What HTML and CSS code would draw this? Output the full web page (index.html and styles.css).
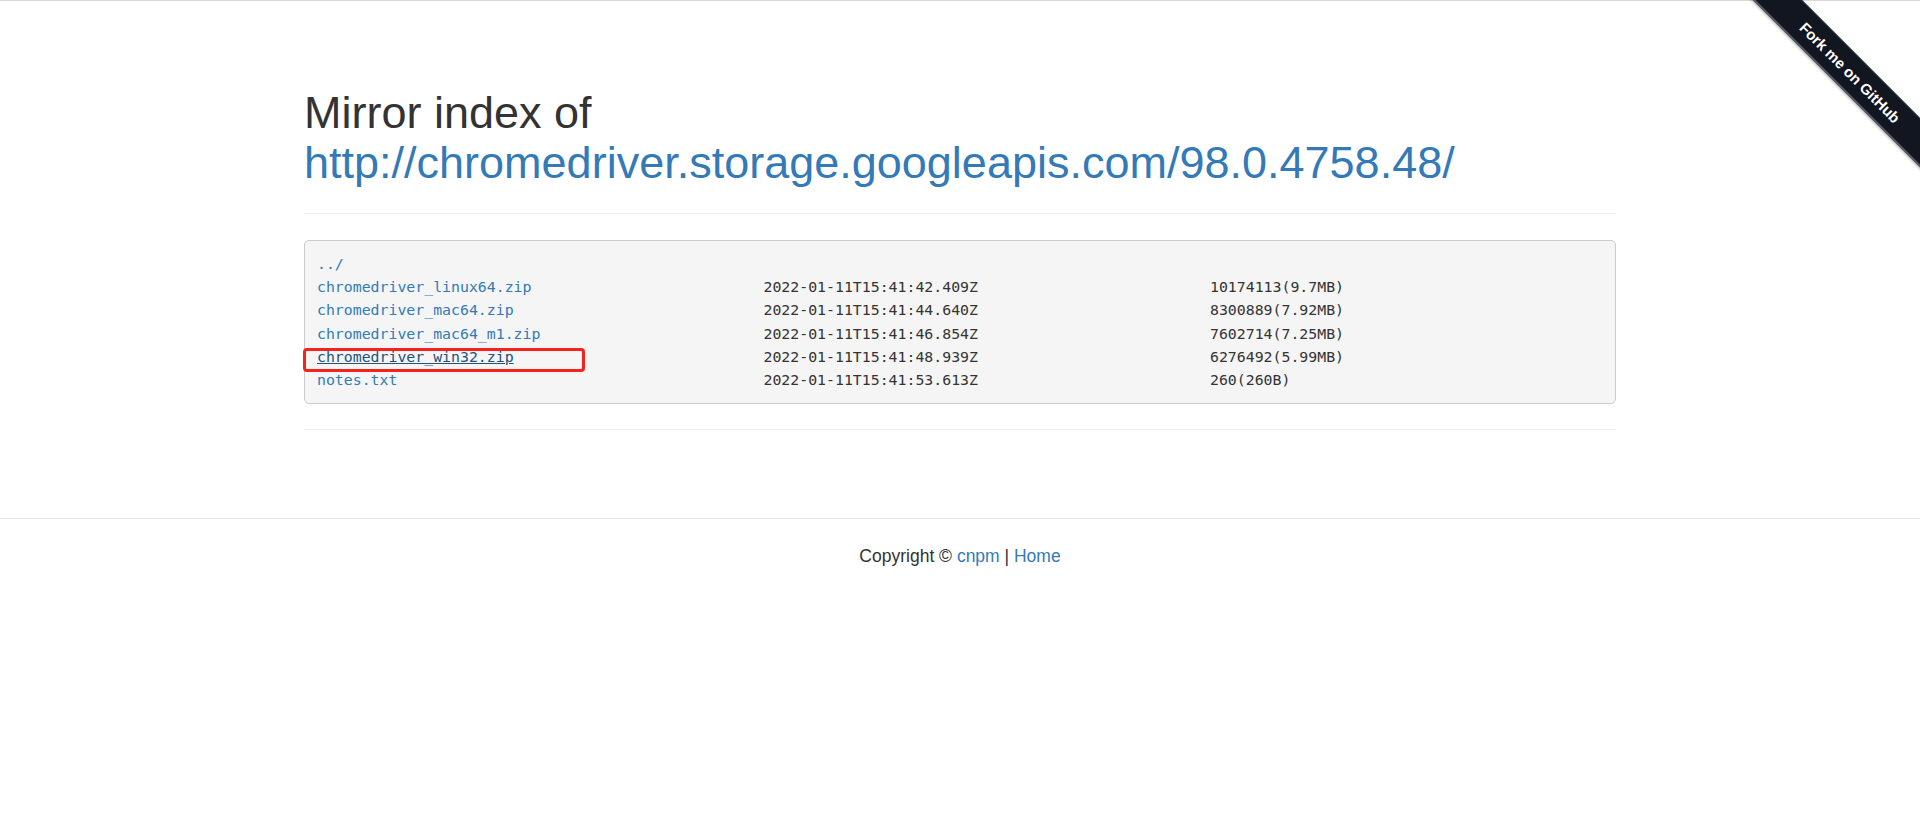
FILE: index.html
```html
<!DOCTYPE html>
<html lang="en">
<head>
<meta charset="utf-8">
<title>Mirror index of http://chromedriver.storage.googleapis.com/98.0.4758.48/</title>
<link rel="stylesheet" href="styles.css">
</head>
<body>
<div class="topline"></div>
<div class="container">
  <div class="page-header">
    <h1>Mirror index of <a href="#">http://chromedriver.storage.googleapis.com/98.0.4758.48/</a></h1>
  </div>
  <div class="listing">
    <div class="row"><a href="#">../</a></div>
    <div class="row"><a href="#">chromedriver_linux64.zip</a><span>2022-01-11T15:41:42.409Z</span><span>10174113(9.7MB)</span></div>
    <div class="row"><a href="#">chromedriver_mac64.zip</a><span>2022-01-11T15:41:44.640Z</span><span>8300889(7.92MB)</span></div>
    <div class="row"><a href="#">chromedriver_mac64_m1.zip</a><span>2022-01-11T15:41:46.854Z</span><span>7602714(7.25MB)</span></div>
    <div class="row marked"><a href="#" class="hover">chromedriver_win32.zip</a><span>2022-01-11T15:41:48.939Z</span><span>6276492(5.99MB)</span><span class="annot"></span></div>
    <div class="row"><a href="#">notes.txt</a><span>2022-01-11T15:41:53.613Z</span><span>260(260B)</span></div>
  </div>
  <hr class="sep">
</div>
<footer class="footer">
  <p>Copyright &copy; <a href="#">cnpm</a> | <a href="#">Home</a></p>
</footer>
<div class="ribbon"><a href="#">Fork me on GitHub</a></div>
</body>
</html>
```
FILE: styles.css
```css
* { box-sizing: border-box; }
html, body { margin: 0; padding: 0; background: #fff; }
body {
  font-family: "Liberation Sans", Arial, sans-serif;
  color: #333;
  font-size: 17.5px;
  line-height: 25px;
  min-height: 832px;
  position: relative;
  overflow: hidden;
}
a { color: #337ab7; text-decoration: none; }
.topline { height: 1px; background: #dadada; }
.container { width: 1312px; margin: 0 auto; }
.page-header {
  margin-top: 87px;
  padding-bottom: 26px;
  border-bottom: 1px solid #eee;
  margin-bottom: 26px;
}
.page-header h1 {
  margin: 0;
  font-size: 45px;
  line-height: 1.1;
  font-weight: 500;
  color: #333;
}
.listing {
  background: #f5f5f5;
  border: 1px solid #ccc;
  border-radius: 5px;
  padding: 12px 12px 11px;
  font-family: "DejaVu Sans Mono", "Liberation Mono", monospace;
  font-size: 14.85px;
  line-height: 23.2px;
  color: #333;
}
.row {
  display: grid;
  grid-template-columns: 446.5px 446.5px 1fr;
  height: 23.2px;
  white-space: pre;
}
.row.marked { position: relative; }
.row a.hover { color: #23527c; text-decoration: underline; }
.annot {
  position: absolute;
  left: -14px;
  top: 2px;
  width: 282px;
  height: 24px;
  border: 3px solid #f5231c;
  border-radius: 4px;
}
.sep {
  margin: 25px 0 0;
  border: 0;
  border-top: 1px solid #eee;
  height: 0;
}
.footer {
  margin-top: 88px;
  border-top: 1px solid #e5e5e5;
  padding-top: 25px;
  text-align: center;
}
.footer p { margin: 0; }
.ribbon {
  position: absolute;
  top: 0;
  right: 0;
  width: 186px;
  height: 186px;
  overflow: hidden;
}
.ribbon a {
  position: absolute;
  left: -34px;
  top: 54.5px;
  width: 300px;
  height: 35px;
  transform: rotate(45deg);
  background: #121621;
  color: #fff;
  display: flex;
  align-items: center;
  justify-content: center;
  font-family: "Liberation Sans", Arial, sans-serif;
  font-weight: bold;
  font-size: 15px;
  line-height: 1;
  border-top: 1px solid rgba(255,255,255,0.12);
  border-bottom: 2px solid rgba(110,112,120,0.8);
  box-shadow: 0 1px 3px rgba(0,0,0,0.35);
  text-shadow: 0 0 1px rgba(0,0,0,0.6);
}
```
